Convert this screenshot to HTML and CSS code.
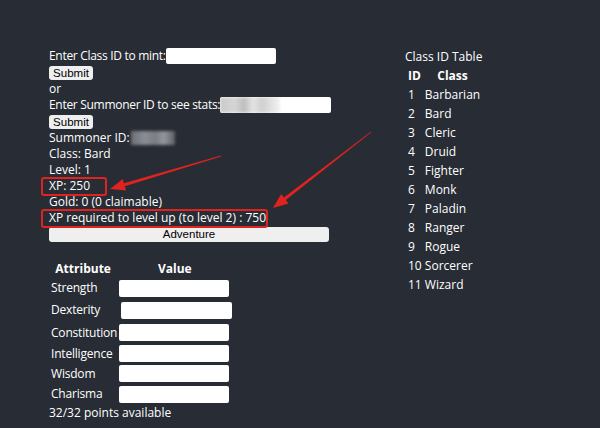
FILE: index.html
```html
<!DOCTYPE html>
<html>
<head>
<meta charset="utf-8">
<link rel="stylesheet" href="styles.css">
</head>
<body>
<div class="page">
  <div class="left">
    <div class="line prompt">Enter Class ID to mint:<span class="input input-mint"></span></div>
    <div class="btn-line"><button class="btn">Submit</button></div>
    <div class="line">or</div>
    <div class="line prompt">Enter Summoner ID to see stats:<span class="input input-summ"><span class="blur blur-in"></span></span></div>
    <div class="btn-line"><button class="btn">Submit</button></div>
    <div class="line">Summoner ID:<span class="blur blur-id"></span></div>
    <div class="line">Class: Bard</div>
    <div class="line">Level: 1</div>
    <div class="line">XP: 250</div>
    <div class="line">Gold: 0 (0 claimable)</div>
    <div class="line">XP required to level up (to level 2) : 750</div>
    <button class="btn btn-wide">Adventure</button>
    <table class="attrs">
      <tr><th>Attribute</th><th>Value</th></tr>
      <tr class="r21"><td>Strength</td><td><span class="input input-attr"></span></td></tr>
      <tr class="r23"><td>Dexterity</td><td><span class="input input-attr input-dex"></span></td></tr>
      <tr class="r22"><td>Constitution</td><td><span class="input input-attr"></span></td></tr>
      <tr class="r20"><td>Intelligence</td><td><span class="input input-attr"></span></td></tr>
      <tr class="r20"><td>Wisdom</td><td><span class="input input-attr"></span></td></tr>
      <tr class="r21"><td>Charisma</td><td><span class="input input-attr"></span></td></tr>
    </table>
    <div class="line points">32/32 points available</div>
  </div>
  <div class="right">
    <div class="title">Class ID Table</div>
    <table class="classes">
      <tr><th>ID</th><th>Class</th></tr>
      <tr><td>1</td><td>Barbarian</td></tr>
      <tr><td>2</td><td>Bard</td></tr>
      <tr><td>3</td><td>Cleric</td></tr>
      <tr><td>4</td><td>Druid</td></tr>
      <tr><td>5</td><td>Fighter</td></tr>
      <tr><td>6</td><td>Monk</td></tr>
      <tr><td>7</td><td>Paladin</td></tr>
      <tr><td>8</td><td>Ranger</td></tr>
      <tr><td>9</td><td>Rogue</td></tr>
      <tr><td>10</td><td>Sorcerer</td></tr>
      <tr><td>11</td><td>Wizard</td></tr>
    </table>
  </div>
</div>
<svg class="annot" width="600" height="428" viewBox="0 0 600 428">
  <rect x="42" y="178" width="64" height="17" rx="2" fill="none" stroke="#e0231e" stroke-width="2"/>
  <rect x="42" y="210" width="225" height="17" rx="2" fill="none" stroke="#e0231e" stroke-width="2"/>
  <polygon fill="#e0231e" points="220.9,155.6 123.9,183.2 122.7,179 110,189 126.1,190.5 124.8,186.3 221.1,156.4"/>
  <polygon fill="#e0231e" points="370.8,131.7 283.9,197.5 281.2,194.1 273,208 288.5,203.5 285.8,200.1 371.3,132.3"/>
</svg>
</body>
</html>
```
FILE: styles.css
```css
html, body {
  margin: 0;
  padding: 0;
  background: #282c34;
}
body {
  width: 600px;
  height: 428px;
  overflow: hidden;
  position: relative;
  color: #fff;
  font-family: "Open Sans", "Noto Sans", sans-serif;
  font-size: 12px;
}
.page {
  display: flex;
  padding: 48px 0 0 49px;
}
.left {
  width: 356px;
  display: flex;
  flex-direction: column;
  align-items: flex-start;
}
.line {
  height: 16px;
  line-height: 16px;
  white-space: nowrap;
  display: flex;
  align-items: center;
}
.prompt {
  letter-spacing: -0.3px;
}
.btn-line {
  height: 17px;
  display: flex;
  align-items: center;
}
.input {
  display: inline-block;
  background: #fff;
  border-radius: 2px;
  height: 16px;
  position: relative;
  overflow: hidden;
}
.input-mint { width: 110px; }
.input-summ { width: 111px; }
.blur {
  display: inline-block;
  filter: blur(1.5px);
}
.blur-in {
  position: absolute;
  left: 0;
  top: 0;
  width: 60px;
  height: 16px;
  background: linear-gradient(90deg, #c9c9c9 0%, #d6d6d6 25%, #bdbdbd 40%, #e4e4e4 55%, #cfcfcf 70%, #f3f3f3 100%);
}
.blur-id {
  width: 44px;
  height: 14px;
  margin-left: 1px;
  background: linear-gradient(90deg, #6b6e75 0%, #8a8d93 30%, #7a7d83 55%, #94969b 75%, #5c5f66 100%);
}
.btn {
  font-family: "Liberation Sans", Arial, sans-serif;
  font-size: 11.5px;
  color: #000;
  background: #efefef;
  border: none;
  border-radius: 3px;
  height: 14px;
  padding: 0;
  line-height: 14px;
  width: 44px;
}
.btn-wide {
  width: 280px;
  height: 15px;
  line-height: 15px;
  margin-top: 1px;
}
.attrs {
  margin-top: 17px;
  border-collapse: collapse;
  margin-left: 0;
}
.attrs th {
  font-weight: bold;
  height: 18px;
  padding: 0;
  text-align: center;
}
.attrs th:first-child { width: 68px; }
.attrs td {
  padding: 0 0 0 2px;
  white-space: nowrap;
}
.attrs td:first-child {
  padding-right: 0;
  letter-spacing: -0.2px;
}
.attrs tr.r20 td { height: 20px; }
.attrs tr.r21 td { height: 21px; }
.attrs tr.r22 td { height: 22px; }
.attrs tr.r23 td { height: 23px; }
.input-attr {
  width: 110px;
  height: 17px;
  vertical-align: middle;
}
.input-dex {
  margin-left: 2px;
  width: 111px;
}
.points {
  margin-top: 1px;
}
.right {
  padding-top: 1px;
}
.title {
  height: 16px;
  line-height: 16px;
}
.classes {
  border-collapse: collapse;
  margin-top: 1px;
}
.classes th, .classes td {
  padding: 0 1px 0 3px;
  height: 19px;
  white-space: nowrap;
}
.classes th {
  text-align: center;
  font-weight: bold;
}
.classes td:first-child { padding-left: 3px; padding-right: 0; }
.annot {
  position: absolute;
  left: 0;
  top: 0;
  pointer-events: none;
}
```
